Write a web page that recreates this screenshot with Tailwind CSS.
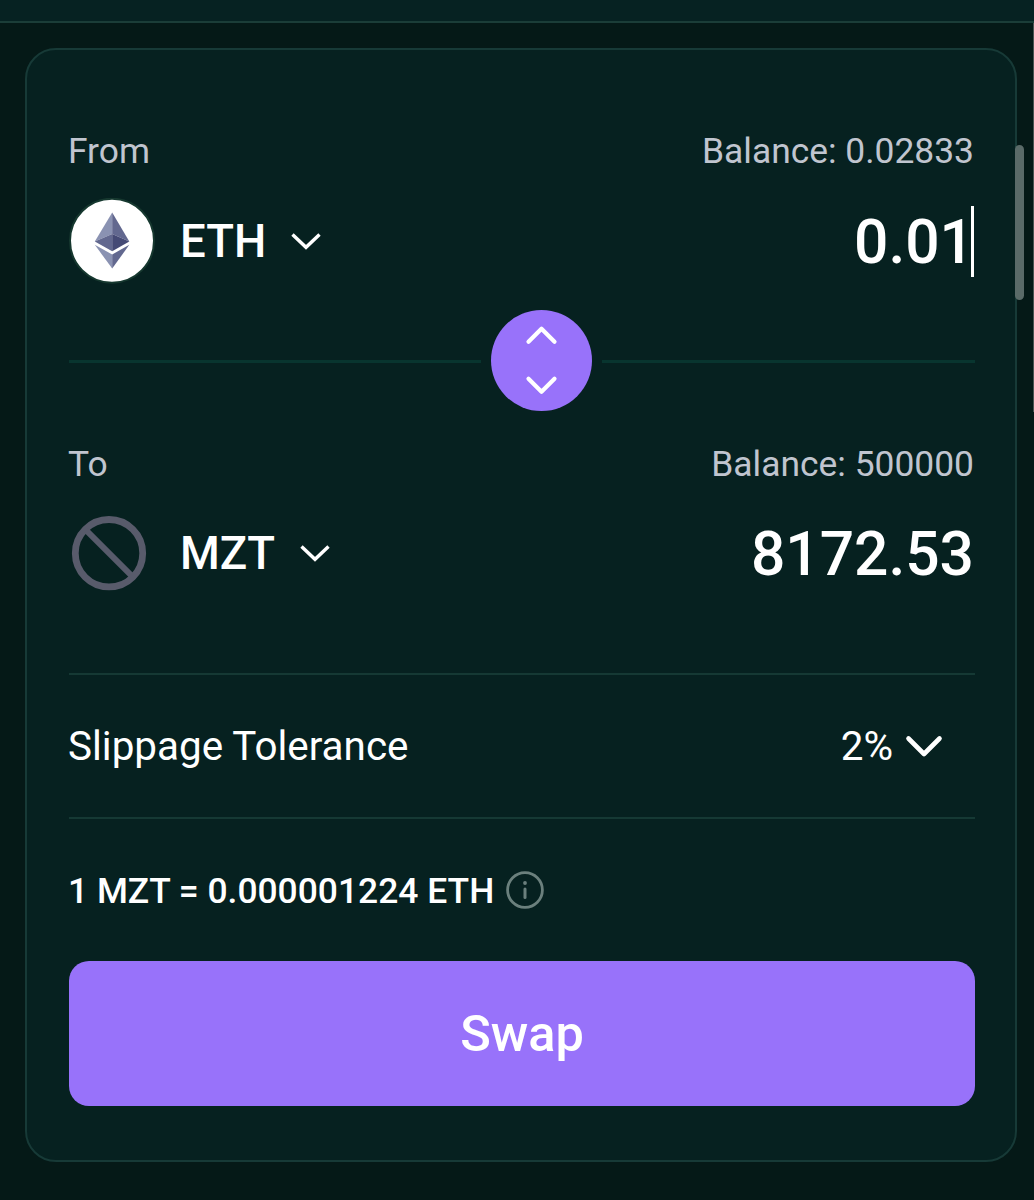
<!DOCTYPE html>
<html lang="en">
<head>
    <meta charset="UTF-8">
    <meta name="viewport" content="width=device-width, initial-scale=1.0">
    <title>Swap</title>
    <script src="https://cdn.jsdelivr.net/npm/@tailwindcss/browser@4"></script>
</head>
<body class="bg-[#051917] font-['Roboto',sans-serif] text-white">
    <div class="relative w-[1034px] h-[1200px] overflow-hidden">
        <!-- Header edge -->
        <header class="h-[23px] bg-[#062222] border-b-2 border-[#1b3d38]"></header>

        <main class="mt-[25px] ml-[25px] w-[992px] h-[1114px] flex flex-col bg-[#062120] border-2 border-[#173a37] rounded-[31px] pt-20 pl-[42px] pr-10">
            <!-- From -->
            <div class="h-[42px] pt-[2px] -ml-px mr-px flex items-center justify-between text-[35.4px] text-[#c0c5cf]">
                <span>From</span>
                <span>Balance: 0.02833</span>
            </div>
            <div class="mt-[26px] h-[86px] flex items-center justify-between">
                <button class="flex items-center text-[45.5px] font-medium">
                    <svg class="w-[86px] h-[86px]" viewBox="0 0 86 86">
                        <circle cx="43" cy="42.7" r="42" fill="#fff" stroke="#16382f" stroke-width="2"/>
                        <path d="M43.2 14.5V36L25.8 43.5z" fill="#8a92b2"/>
                        <path d="M43.2 14.5V36L60.3 43.5z" fill="#62688f"/>
                        <path d="M43.2 36v17.3L25.8 43.5z" fill="#62688f"/>
                        <path d="M43.2 36v17.3L60.3 43.5z" fill="#454a75"/>
                        <path d="M25.8 46.8l17.4 9.8v14z" fill="#8a92b2"/>
                        <path d="M60.3 46.8l-17.1 9.8v14z" fill="#62688f"/>
                    </svg>
                    <span class="ml-[25px] pt-[2px]">ETH</span>
                    <svg class="ml-[25px] w-[30px] h-[18px]" viewBox="0 0 30 18" fill="none" stroke="#fff" stroke-width="3.4">
                        <path d="M1.5 2.5l13.5 12.8L28.5 2.5"/>
                    </svg>
                </button>
                <div class="mr-px flex items-center text-[60.5px] font-medium">
                    <span class="pt-[4px] -mr-[3px]">0.01</span>
                    <span class="w-[3px] h-[71px] bg-white"></span>
                </div>
            </div>

            <!-- Switch direction -->
            <div class="mt-[26px] h-[101px] flex items-center">
                <span class="mt-[2px] w-[412px] h-[3px] bg-[#08352f]"></span>
                <button class="mx-[10px] w-[101px] h-[101px] rounded-full bg-[#9872fa] flex items-center justify-center">
                    <svg class="w-[35px] h-[72px]" viewBox="0 0 35 72" fill="none" stroke="#fff" stroke-width="4.2" stroke-linecap="round" stroke-linejoin="round">
                        <path d="M4.5 16.8L17.5 3.8l13 13M4.5 53.8l13 13 13-13"/>
                    </svg>
                </button>
                <span class="mt-[2px] flex-1 h-[3px] bg-[#08352f]"></span>
            </div>

            <!-- To -->
            <div class="mt-8 h-[42px] pt-[2px] -ml-px mr-px flex items-center justify-between text-[35.4px] text-[#c0c5cf]">
                <span>To</span>
                <span>Balance: 500000</span>
            </div>
            <div class="mt-[25px] h-[86px] flex items-center justify-between">
                <button class="flex items-center text-[45.5px] font-medium">
                    <svg class="w-[86px] h-[86px]" viewBox="0 0 86 86" fill="none" stroke="#585b6b">
                        <circle cx="40" cy="43.2" r="33.7" stroke-width="6.8"/>
                        <path d="M17 20.2l46 46" stroke-width="6"/>
                    </svg>
                    <span class="ml-[25px] pt-[2px]">MZT</span>
                    <svg class="ml-[25px] w-[30px] h-[18px]" viewBox="0 0 30 18" fill="none" stroke="#fff" stroke-width="3.4">
                        <path d="M1.5 2.5l13.5 12.8L28.5 2.5"/>
                    </svg>
                </button>
                <span class="pt-[5px] mr-px text-[60.5px] font-medium">8172.53</span>
            </div>

            <!-- Slippage -->
            <div class="mt-[77px] h-[146px] pt-[2px] flex items-center justify-between border-y-2 border-[#153934] text-[40.4px]">
                <span class="-ml-px">Slippage Tolerance</span>
                <button class="flex items-center mr-8">
                    <span>2%</span>
                    <svg class="ml-[12px] w-[38px] h-6" viewBox="0 0 38 24" fill="none" stroke="#fff" stroke-width="4.6" stroke-linecap="round" stroke-linejoin="round">
                        <path d="M3.5 3.5L19 19 34.5 3.5"/>
                    </svg>
                </button>
            </div>

            <!-- Rate -->
            <div class="h-[142px] flex items-center text-[35.4px] font-medium">
                <span class="pt-[3px] -ml-px">1 MZT = 0.000001224 ETH</span>
                <svg class="ml-3 w-[38px] h-[38px]" viewBox="0 0 38 38" fill="none" stroke="#6b807d">
                    <circle cx="19" cy="19" r="17.4" stroke-width="2.8"/>
                    <path d="M19 18v8.5" stroke-width="3" stroke-linecap="round"/>
                    <circle cx="19" cy="12" r="1.9" fill="#6b807d" stroke="none"/>
                </svg>
            </div>

            <button class="h-[145px] rounded-[20px] bg-[#9872fa] text-[50.5px] font-medium">Swap</button>
        </main>

        <!-- Scroll thumb and page edge -->
        <div class="absolute left-[1015px] top-[145px] w-[9px] h-[155px] rounded-full bg-[#5a6a68]"></div>
        <div class="absolute right-0 top-[23px] w-px h-[389px] bg-[#4a5452]"></div>
    </div>
</body>
</html>
